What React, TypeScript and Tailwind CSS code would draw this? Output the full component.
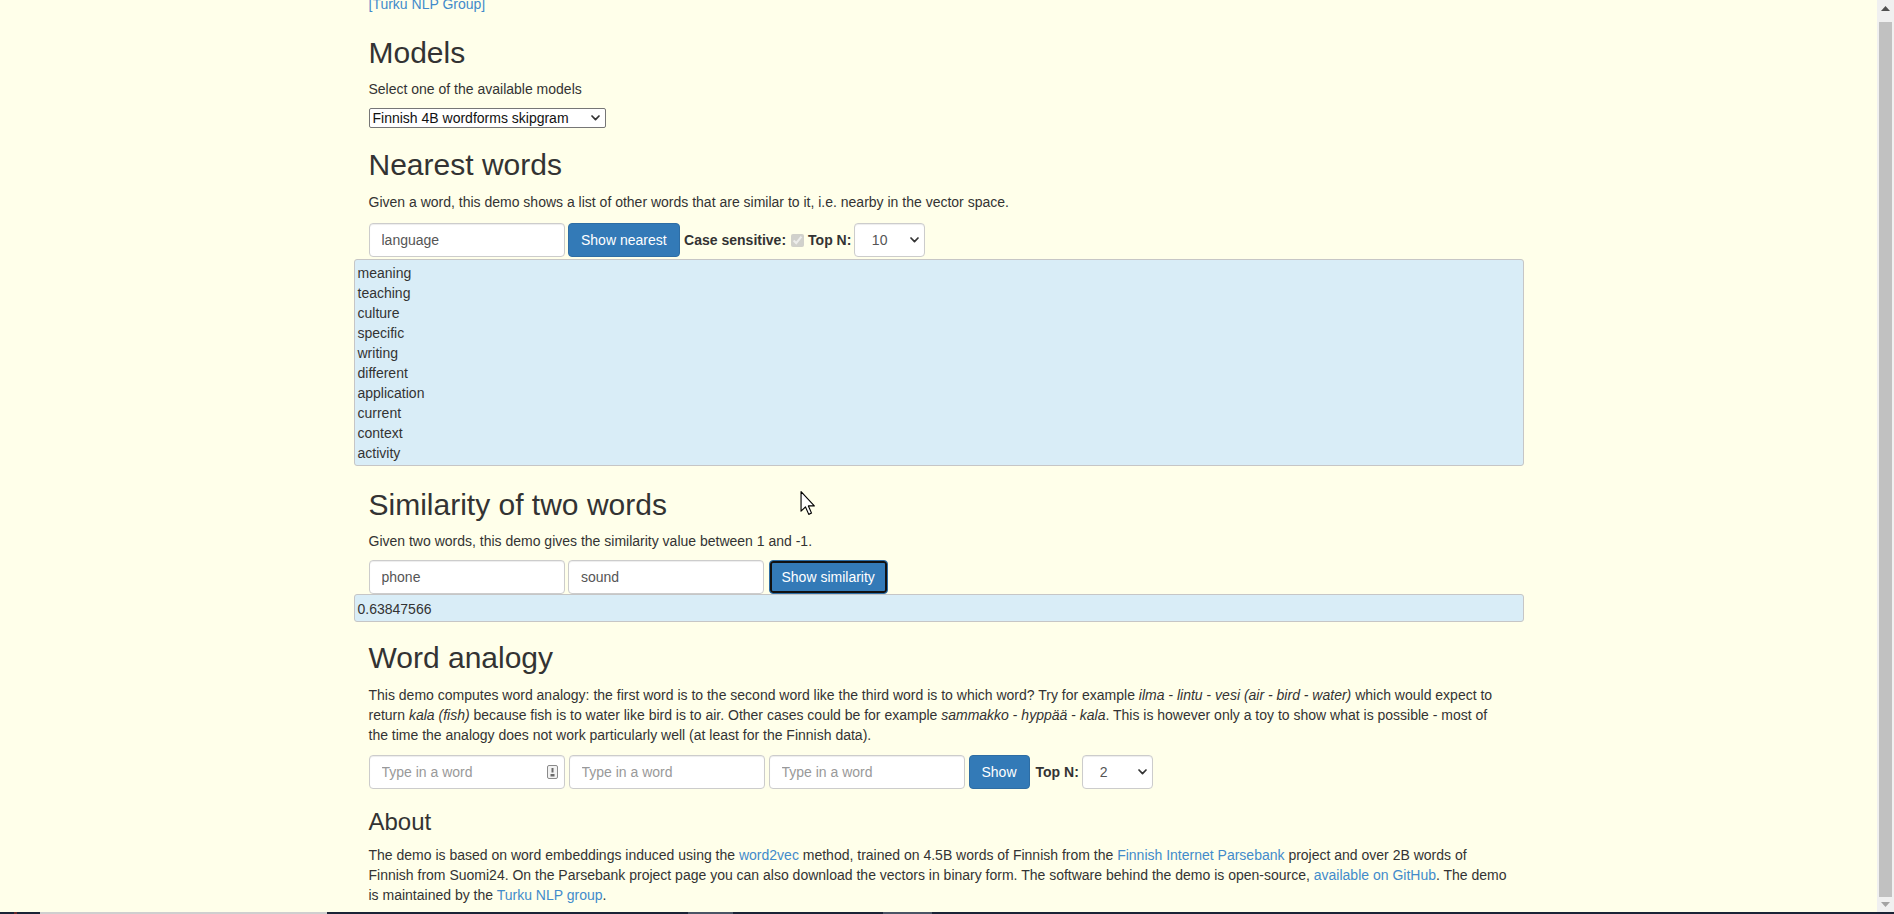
import React from "react";

const words = [
  "meaning",
  "teaching",
  "culture",
  "specific",
  "writing",
  "different",
  "application",
  "current",
  "context",
  "activity",
];

function Chevron() {
  return (
    <svg width="9" height="6" viewBox="0 0 9 6" className="block">
      <path d="M1 1 L4.5 4.6 L8 1" stroke="#333" strokeWidth="1.7" fill="none" strokeLinecap="round" strokeLinejoin="round" />
    </svg>
  );
}

function BsSelect({ value, options }: { value: string; options: string[] }) {
  return (
    <div className="relative h-[34px] w-[71px] ml-[-1px]">
      <select
        defaultValue={value}
        className="appearance-none w-full h-full rounded-[4px] border border-[#ccc] bg-white pl-[17px] pr-[20px] text-[14px] text-[#555] shadow-[inset_0_1px_1px_rgba(0,0,0,0.075)] outline-none"
      >
        {options.map((o) => (
          <option key={o}>{o}</option>
        ))}
      </select>
      <div className="absolute right-[6px] top-[14px] pointer-events-none">
        <Chevron />
      </div>
    </div>
  );
}

function BsInput({ value, placeholder, icon }: { value?: string; placeholder?: string; icon?: boolean }) {
  return (
    <div className="relative w-[196px] h-[34px]">
      <input
        defaultValue={value}
        placeholder={placeholder}
        className="w-full h-full rounded-[4px] border border-[#ccc] bg-white px-[12px] text-[14px] text-[#555] placeholder:text-[#999] shadow-[inset_0_1px_1px_rgba(0,0,0,0.075)] outline-none"
      />
      {icon && (
        <svg width="11" height="14" viewBox="0 0 11 14" className="absolute left-[178px] top-[10px]">
          <rect x="0.5" y="0.5" width="10" height="13" rx="1.5" fill="#f2f2f2" stroke="#8a8a8a" />
          <rect x="4.5" y="3" width="2" height="4.5" fill="#6a6a6a" />
          <rect x="3.5" y="9" width="4" height="2.5" fill="#6a6a6a" />
        </svg>
      )}
    </div>
  );
}

function BsButton({ children, focused }: { children: React.ReactNode; focused?: boolean }) {
  return (
    <button
      className={`h-[34px] px-[12px] rounded-[4px] border border-[#2e6da4] bg-[#337ab7] text-white text-[14px] leading-[20px] whitespace-nowrap ${
        focused ? "shadow-[inset_0_0_0_2px_#111]" : ""
      }`}
    >
      {children}
    </button>
  );
}

const A = ({ children }: { children: React.ReactNode }) => (
  <a href="#" className="text-[#428bca]">
    {children}
  </a>
);

export default function App() {
  return (
    <div className="relative w-[1894px] h-[914px] overflow-hidden bg-[#ffffea] font-['Liberation_Sans',Arial,sans-serif] text-[14px] leading-[20px] text-[#333]">
      <div className="flex h-[912px]">
        <div className="flex-1 overflow-hidden">
          <div className="w-[1170px] mx-auto mt-[-6px]">
            <div className="px-[15px]">
              <div className="h-[20px]">
                <A>[Turku NLP Group]</A>
              </div>
              <h2 className="mt-[22px] text-[30px] leading-[33px] font-normal">Models</h2>
              <p className="mt-[10px]">Select one of the available models</p>
              <div className="relative mt-[9px] w-[237px] h-[20px]">
                <select
                  defaultValue="Finnish 4B wordforms skipgram"
                  className="appearance-none w-full h-full rounded-[2px] border border-[#767676] bg-white pl-[3px] text-[14px] leading-[18px] text-[#111] outline-none"
                >
                  <option>Finnish 4B wordforms skipgram</option>
                  <option>English 4B wordforms skipgram</option>
                </select>
                <div className="absolute right-[6px] top-[7px] pointer-events-none">
                  <Chevron />
                </div>
              </div>

              <h2 className="mt-[20px] text-[30px] leading-[33px] font-normal">Nearest words</h2>
              <p className="mt-[11px]">
                Given a word, this demo shows a list of other words that are similar to it, i.e. nearby in the vector space.
              </p>
              <div className="mt-[11px] flex items-center gap-[3.5px] h-[34px]">
                <BsInput value="language" />
                <BsButton>Show nearest</BsButton>
                <span className="font-bold ml-[1px]">Case sensitive:</span>
                <input type="checkbox" checked disabled readOnly className="w-[13px] h-[13px] m-0 ml-[1px]" />
                <span className="font-bold ml-[1px]">Top N:</span>
                <BsSelect value="10" options={["1", "2", "5", "10", "20"]} />
              </div>
            </div>

            <div className="mt-[2px] rounded-[3px] border border-[#c6c6c6] bg-[#d9edf7] pt-[3px] pb-[2px] px-[3px]">
              {words.map((w) => (
                <div key={w} className="leading-[20px]">
                  {w}
                </div>
              ))}
            </div>

            <div className="px-[15px]">
              <h2 className="mt-[22px] text-[30px] leading-[33px] font-normal">Similarity of two words</h2>
              <p className="mt-[10px]">Given two words, this demo gives the similarity value between 1 and -1.</p>
              <div className="mt-[9px] flex items-center gap-[3.5px] h-[34px]">
                <BsInput value="phone" />
                <BsInput value="sound" />
                <div className="ml-[1px]">
                  <BsButton focused>Show similarity</BsButton>
                </div>
              </div>
            </div>
            <div className="rounded-[3px] border border-[#c6c6c6] bg-[#d9edf7] pt-[4px] pb-[2px] px-[3px]">0.63847566</div>

            <div className="px-[15px]">
              <h2 className="mt-[19px] text-[30px] leading-[33px] font-normal">Word analogy</h2>
              <p className="mt-[11px]">
                This demo computes word analogy: the first word is to the second word like the third word is to which word? Try for example{" "}
                <i>ilma</i> - <i>lintu</i> - <i>vesi</i> <i>(air - bird - water)</i> which would expect to return <i>kala (fish)</i> because fish is
                to water like bird is to air. Other cases could be for example <i>sammakko</i> - <i>hyppää</i> - <i>kala</i>. This is however only a
                toy to show what is possible - most of the time the analogy does not work particularly well (at least for the Finnish data).
              </p>
              <div className="mt-[10px] flex items-center gap-[4px] h-[34px]">
                <BsInput placeholder="Type in a word" icon />
                <BsInput placeholder="Type in a word" />
                <BsInput placeholder="Type in a word" />
                <BsButton>Show</BsButton>
                <span className="font-bold ml-[2px]">Top N:</span>
                <BsSelect value="2" options={["1", "2", "5", "10"]} />
              </div>

              <h3 className="mt-[20px] text-[24px] leading-[26px] font-normal">About</h3>
              <p className="mt-[10px]">
                The demo is based on word embeddings induced using the <A>word2vec</A> method, trained on 4.5B words of Finnish from the{" "}
                <A>Finnish Internet Parsebank</A> project and over 2B words of Finnish from Suomi24. On the Parsebank project page you can also
                download the vectors in binary form. The software behind the demo is open-source, <A>available on GitHub</A>. The demo is
                maintained by the <A>Turku NLP group</A>.
              </p>
            </div>
          </div>
        </div>

        {/* scrollbar */}
        <div className="w-[17px] h-full bg-[#f0f0f0] flex flex-col items-center">
          <div className="h-[17px] flex items-center justify-center">
            <svg width="9" height="5" viewBox="0 0 9 5">
              <path d="M0 5 L4.5 0 L9 5 Z" fill="#505050" />
            </svg>
          </div>
          <div className="mt-[5px] w-[13px] h-[875px] bg-[#c1c1c1]" />
          <div className="flex-1 flex items-center justify-center">
            <svg width="9" height="5" viewBox="0 0 9 5">
              <path d="M0 0 L9 0 L4.5 5 Z" fill="#a3a3a3" />
            </svg>
          </div>
        </div>
      </div>

      {/* taskbar edge */}
      <div className="flex h-[2px] bg-[#1a2336]">
        <div className="w-[14px]" />
        <div className="w-[3px] bg-[#6b2a2a]" />
        <div className="w-[23px]" />
        <div className="w-[287px] bg-[#cfcfcf]" />
        <div className="w-[361px]" />
        <div className="w-[45px] bg-[#4b5566]" />
        <div className="w-[150px]" />
        <div className="w-[49px] bg-[#4b5566]" />
      </div>

      {/* mouse cursor */}
      <svg width="16" height="24" viewBox="0 0 12 19" className="absolute left-[800px] top-[491px]">
        <path d="M0.5 0.5 L0.5 16 L4 12.6 L6.6 18.5 L8.8 17.5 L6.3 11.8 L11 11.8 Z" fill="#fff" stroke="#000" strokeWidth="0.9" strokeLinejoin="round" />
      </svg>
    </div>
  );
}
